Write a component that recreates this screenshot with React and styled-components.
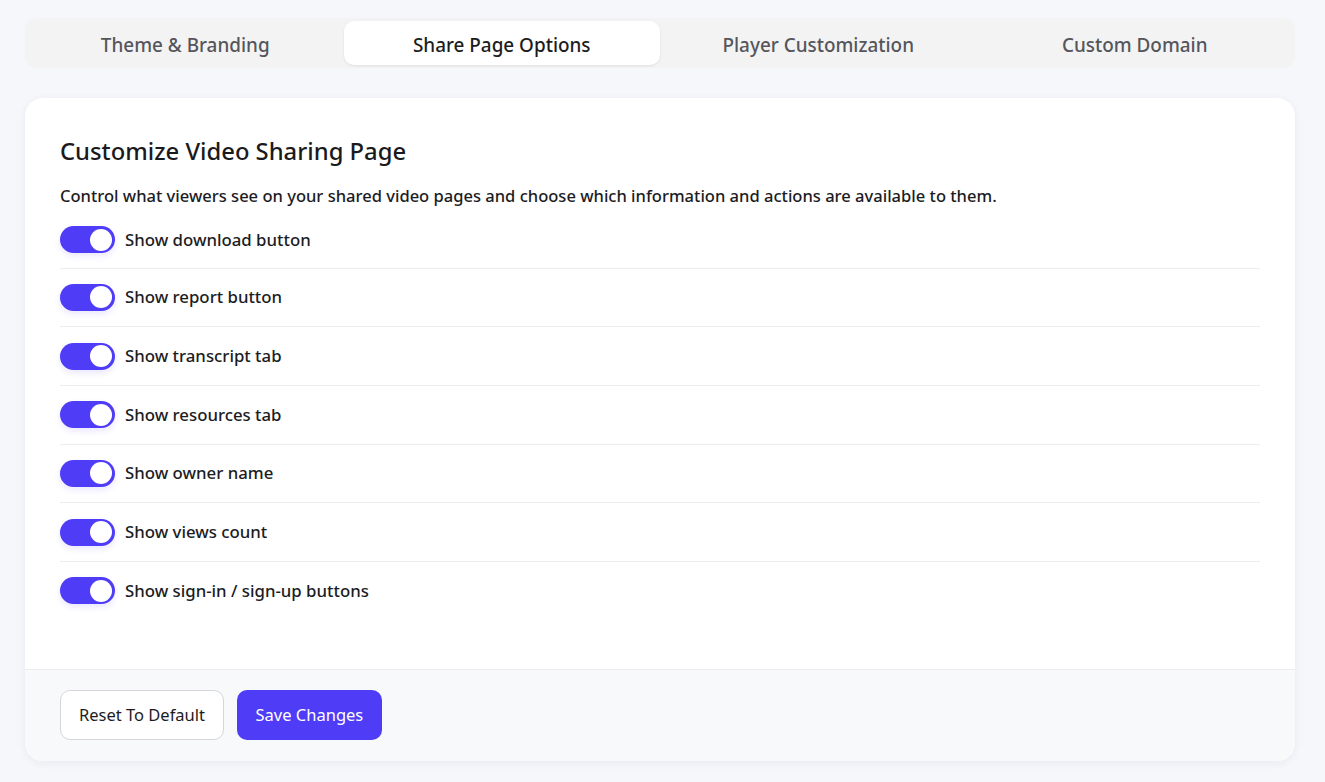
import React, { useState } from "react";
import styled, { createGlobalStyle } from "styled-components";

const GlobalStyle = createGlobalStyle`
  * { box-sizing: border-box; }
  body {
    margin: 0;
    background: #f6f7fb;
    font-family: "Noto Sans", "Open Sans", sans-serif;
    color: #1c1c1f;
  }
`;

const tabs = ["Theme & Branding", "Share Page Options", "Player Customization", "Custom Domain"];

const initialOptions = [
  { key: "download", label: "Show download button" },
  { key: "report", label: "Show report button" },
  { key: "transcript", label: "Show transcript tab" },
  { key: "resources", label: "Show resources tab" },
  { key: "owner", label: "Show owner name" },
  { key: "views", label: "Show views count" },
  { key: "auth", label: "Show sign-in / sign-up buttons" },
];

const App = () => {
  const [activeTab, setActiveTab] = useState(1);
  const [values, setValues] = useState(
    Object.fromEntries(initialOptions.map((o) => [o.key, true]))
  );

  const toggle = (key) => setValues((v) => ({ ...v, [key]: !v[key] }));

  const reset = () =>
    setValues(Object.fromEntries(initialOptions.map((o) => [o.key, true])));

  return (
    <>
      <GlobalStyle />
      <Page>
        <TabBar>
          {tabs.map((t, i) => (
            <Tab key={t} $active={i === activeTab} onClick={() => setActiveTab(i)}>
              {t}
            </Tab>
          ))}
        </TabBar>

        <Card>
          <CardBody>
            <Title>Customize Video Sharing Page</Title>
            <Description>
              Control what viewers see on your shared video pages and choose which
              information and actions are available to them.
            </Description>
            <OptionList>
              {initialOptions.map((o) => (
                <OptionRow key={o.key}>
                  <Switch
                    type="button"
                    $on={values[o.key]}
                    onClick={() => toggle(o.key)}
                    aria-pressed={values[o.key]}
                  >
                    <Knob $on={values[o.key]} />
                  </Switch>
                  <OptionLabel>{o.label}</OptionLabel>
                </OptionRow>
              ))}
            </OptionList>
          </CardBody>
          <CardFooter>
            <SecondaryButton onClick={reset}>Reset To Default</SecondaryButton>
            <PrimaryButton>Save Changes</PrimaryButton>
          </CardFooter>
        </Card>
      </Page>
    </>
  );
};

const Page = styled.div`
  padding: 18px 30px 22px 25px;
  display: flex;
  flex-direction: column;
  gap: 30px;
`;

const TabBar = styled.div`
  display: grid;
  grid-template-columns: repeat(4, 1fr);
  background: #f3f3f4;
  border-radius: 12px;
  padding: 3px 2px;
  height: 50px;
`;

const Tab = styled.button`
  border: none;
  border-radius: 10px;
  padding: 3px 0 0;
  font-family: inherit;
  font-size: 18.9px;
  font-weight: 500;
  cursor: pointer;
  background: ${(p) => (p.$active ? "#ffffff" : "transparent")};
  color: ${(p) => (p.$active ? "#1d1d20" : "#55565b")};
  box-shadow: ${(p) => (p.$active ? "0 1px 3px rgba(0,0,0,0.08)" : "none")};
`;

const Card = styled.div`
  background: #ffffff;
  border-radius: 18px;
  box-shadow: 0 2px 10px rgba(30, 40, 90, 0.06);
  overflow: hidden;
`;

const CardBody = styled.div`
  padding: 37px 35px 49px 35px;
`;

const Title = styled.h2`
  margin: 0;
  font-size: 23.8px;
  font-weight: 500;
  line-height: 32px;
  color: #1a1a1d;
`;

const Description = styled.p`
  margin: 17px 0 0;
  font-size: 16.55px;
  font-weight: 500;
  line-height: 24px;
  color: #1c1c1f;
`;

const OptionList = styled.div`
  display: flex;
  flex-direction: column;
  margin-top: 2px;
`;

const OptionRow = styled.div`
  display: flex;
  align-items: center;
  gap: 10px;
  padding: 15.33px 0;
  border-bottom: 1px solid #ececee;
  &:first-child { padding-top: 16px; padding-bottom: 14.66px; }
  &:last-child { border-bottom: none; }
`;

const Switch = styled.button`
  position: relative;
  width: 55px;
  height: 27px;
  border: none;
  padding: 0;
  border-radius: 14px;
  background: ${(p) => (p.$on ? "#4f3cf7" : "#d4d4d8")};
  cursor: pointer;
  flex-shrink: 0;
  box-shadow: 0 3px 6px rgba(79, 60, 247, 0.12);
`;

const Knob = styled.span`
  position: absolute;
  top: 2.5px;
  left: ${(p) => (p.$on ? "30px" : "3px")};
  width: 22px;
  height: 22px;
  border-radius: 50%;
  background: #ffffff;
  transition: left 0.2s ease;
`;

const OptionLabel = styled.span`
  font-size: 16.8px;
  font-weight: 500;
  line-height: 24px;
  color: #1c1c1f;
`;

const CardFooter = styled.div`
  display: flex;
  gap: 13px;
  padding: 20px 35px 21px;
  background: #f8f9fb;
  border-top: 1px solid #ececef;
`;

const SecondaryButton = styled.button`
  height: 50px;
  padding: 0 18px;
  border-radius: 10px;
  border: 1px solid #d6d6da;
  background: #ffffff;
  color: #1c1c1f;
  font-family: inherit;
  font-size: 16.5px;
  cursor: pointer;
`;

const PrimaryButton = styled.button`
  height: 50px;
  padding: 0 18.5px;
  border-radius: 10px;
  border: none;
  background: #4f3cf7;
  color: #ffffff;
  font-family: inherit;
  font-size: 16.5px;
  cursor: pointer;
`;

export default App;
